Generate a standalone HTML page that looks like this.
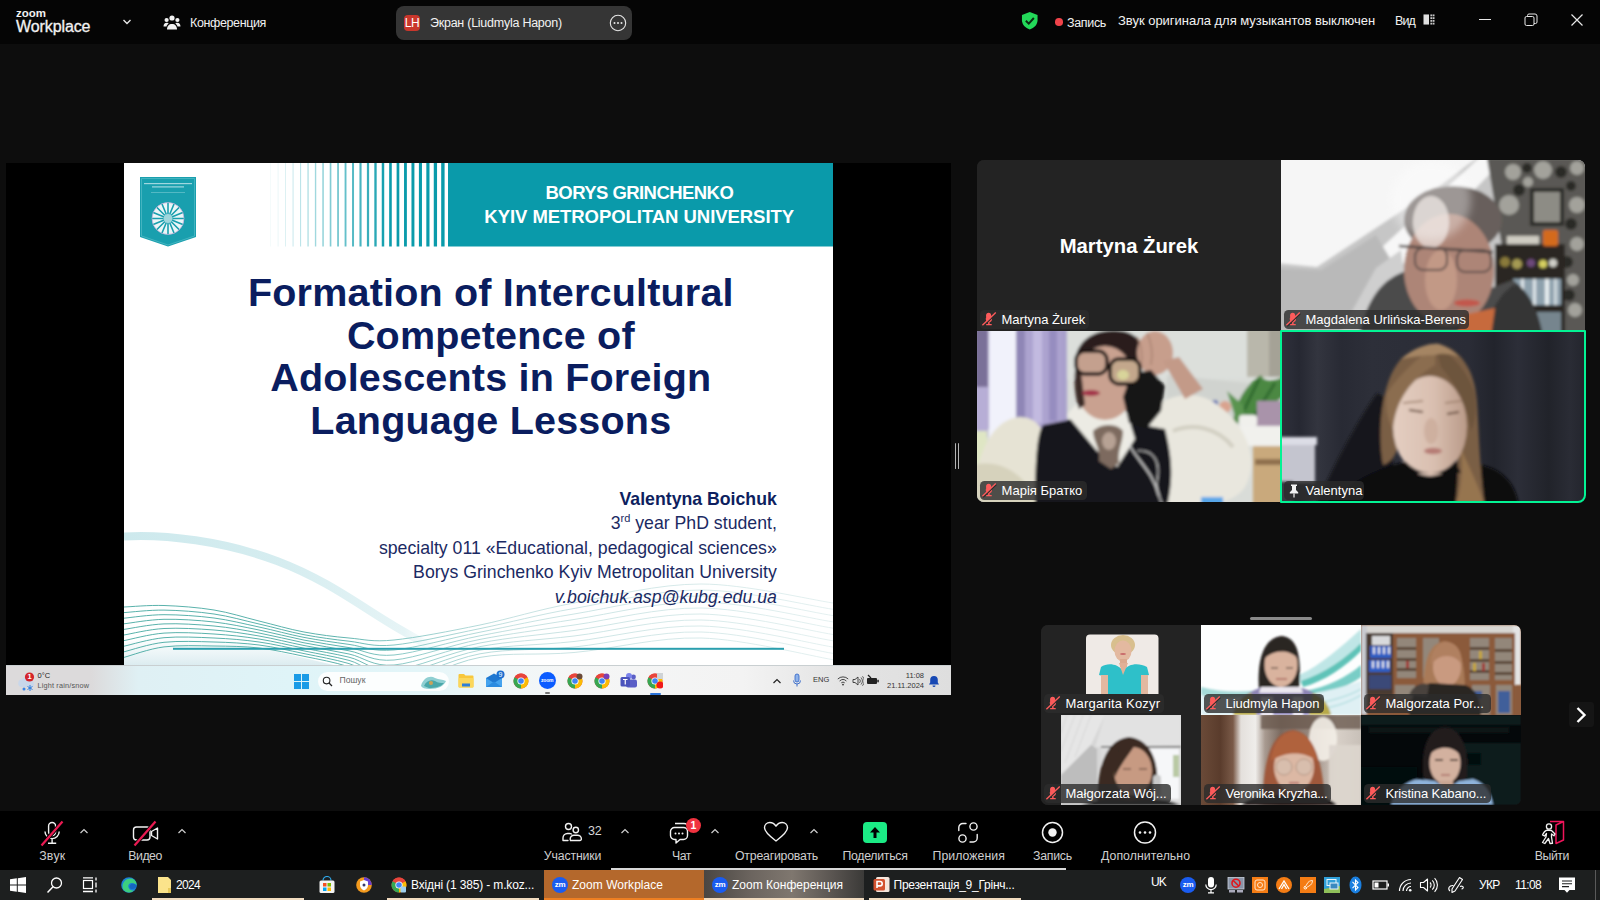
<!DOCTYPE html>
<html lang="ru">
<head>
<meta charset="utf-8">
<title>Zoom Конференция</title>
<style>
*{box-sizing:border-box;margin:0;padding:0}
html,body{width:1600px;height:900px;overflow:hidden;background:#0d0d0d}
body{position:relative;font-family:"Liberation Sans","DejaVu Sans",sans-serif;color:#fff;font-size:13px}
.abs{position:absolute}
#titlebar{position:absolute;left:0;top:0;width:1600px;height:44px;background:#050505}
#titlebar .t{position:absolute;white-space:nowrap;color:#f2f2f2}
#share{position:absolute;left:6px;top:163px;width:945px;height:532px;background:#000;overflow:hidden}
#slide{position:absolute;left:118px;top:0;width:709px;height:502px;background:#fff;overflow:hidden}
#w11{position:absolute;left:0;top:502px;width:945px;height:30px;border-top:1px solid #c9cfd1;background:linear-gradient(90deg,#dcdadb 0,#dcdadb 9%,#dff0f4 14%,#dff4f8 30%,#e3f5f8 44%,#f0f7f8 52%,#f5f6f6 60%,#f3f3f3 78%,#e4e4e4 88%,#dedede 100%)}
#toolbar{position:absolute;left:0;top:811px;width:1600px;height:59px;background:#000}
#wintask{position:absolute;left:0;top:870px;width:1600px;height:30px;background:#1d1f1f}
.tile{position:absolute;overflow:hidden;background:#232323}
.tag{position:absolute;height:19px;line-height:19px;border-radius:4.500px;background:rgba(44,44,44,.8);color:#fff;font-size:13px;white-space:nowrap;padding:0 0 0 21.500px;overflow:hidden}
.hd{text-align:center;font-weight:bold;font-size:18.5px;line-height:22px;color:#fff;white-space:nowrap}
.ttl{left:0;width:733.7px;text-align:center;font-weight:bold;font-size:39.5px;line-height:43px;color:#0a1d5f;white-space:nowrap;letter-spacing:0.2px}
.au{right:56.2px;text-align:right;font-size:17.7px;line-height:22px;color:#1b2a63;white-space:nowrap}
.tl{position:absolute;top:36.8px;font-size:12.3px;line-height:16px;color:#cfcfcf;white-space:nowrap}
.kl{position:absolute;font-size:12px;line-height:14px;color:#fff;white-space:nowrap}
</style>
</head>
<body>
<div id="titlebar">
  <div class="t" style="left:16px;top:6.5px;font-size:11.5px;font-weight:bold;letter-spacing:0px;line-height:12px">zoom</div>
  <div class="t" style="left:16px;top:17px;font-size:16px;line-height:20px;letter-spacing:-0.1px;-webkit-text-stroke:0.3px #f2f2f2">Workplace</div>
  <svg class="abs" style="left:121px;top:17px" width="12" height="10" viewBox="0 0 12 10"><path d="M2.5 3 L6 6.5 L9.5 3" fill="none" stroke="#e8e8e8" stroke-width="1.4"/></svg>
  <svg class="abs" style="left:163px;top:14px" width="18" height="17" viewBox="0 0 18 17"><g fill="#f2f2f2"><circle cx="9" cy="4" r="2.6"/><circle cx="3.6" cy="6" r="2.1"/><circle cx="14.4" cy="6" r="2.1"/><path d="M4 15.5c0-3.5 2-5.5 5-5.500s5 2 5 5.500z"/><path d="M0.500 12.500c0-2.500 1.200-3.800 3.200-3.800c1 0 1.500 0.300 2 0.800c-1.300 1-2 2-2.200 3z"/><path d="M17.500 12.500c0-2.500-1.200-3.800-3.200-3.800c-1 0-1.500 0.300-2 0.800c1.300 1 2 2 2.200 3z"/></g></svg>
  <div class="t" style="left:190px;top:15px;font-size:12.5px;line-height:16px;letter-spacing:-0.37px">Конференция</div>
  <div class="abs" style="left:396px;top:6px;width:236px;height:34px;border-radius:8px;background:#353535"></div>
  <div class="abs" style="left:404px;top:15px;width:16px;height:16px;border-radius:4px;background:#c9372c;color:#fff;font-size:12px;line-height:16px;text-align:center;letter-spacing:-0.3px">LH</div>
  <div class="t" style="left:430px;top:15px;font-size:12.5px;line-height:16px;letter-spacing:-0.25px">Экран (Liudmyla Hapon)</div>
  <svg class="abs" style="left:609px;top:14px" width="18" height="18" viewBox="0 0 18 18"><circle cx="9" cy="9" r="7.700" fill="none" stroke="#e6e6e6" stroke-width="1.100"/><circle cx="5.500" cy="9" r="1" fill="#e6e6e6"/><circle cx="9" cy="9" r="1" fill="#e6e6e6"/><circle cx="12.500" cy="9" r="1" fill="#e6e6e6"/></svg>
  <svg class="abs" style="left:1019.5px;top:11px" width="19.5" height="19.5" viewBox="0 0 20 20"><path d="M10 1 L18 4 V9.500 C18 14 14.500 17.500 10 19 C5.500 17.500 2 14 2 9.500 V4 Z" fill="#23d959"/><path d="M6 10 L9 13 L14.200 7.200" fill="none" stroke="#0a2a12" stroke-width="2"/></svg>
  <div class="abs" style="left:1055.2px;top:18.2px;width:7.6px;height:7.6px;border-radius:50%;background:#f0434a"></div>
  <div class="t" style="left:1067px;top:14.5px;font-size:12.5px;line-height:16px;letter-spacing:-0.33px">Запись</div>
  <div class="t" style="left:1118px;top:13px;font-size:13px;line-height:16px;letter-spacing:-0.02px">Звук оригинала для музыкантов выключен</div>
  <div class="t" style="left:1395px;top:13px;font-size:12.5px;line-height:16px;letter-spacing:-0.85px">Вид</div>
  <svg class="abs" style="left:1423px;top:14px" width="12" height="11" viewBox="0 0 13 12"><rect x="0.500" y="0.500" width="6" height="11" fill="#e0e0e0"/><g fill="#c8c8c8"><rect x="8" y="0.500" width="2" height="2"/><rect x="10.500" y="0.500" width="2" height="2"/><rect x="8" y="3.500" width="2" height="2"/><rect x="10.500" y="3.500" width="2" height="2"/><rect x="8" y="6.500" width="2" height="2"/><rect x="10.500" y="6.500" width="2" height="2"/><rect x="8" y="9.500" width="2" height="2"/><rect x="10.500" y="9.500" width="2" height="2"/></g></svg>
  <div class="abs" style="left:1479px;top:19px;width:12px;height:1px;background:#e8e8e8"></div>
  <svg class="abs" style="left:1524px;top:13px" width="14" height="14" viewBox="0 0 14 14"><rect x="1" y="3.500" width="9" height="9" rx="1.500" fill="none" stroke="#e8e8e8" stroke-width="1"/><path d="M3.500 3.500 V2.500 a1.500 1.500 0 0 1 1.500 -1.500 H11 a2 2 0 0 1 2 2 V9 a1.500 1.500 0 0 1 -1.500 1.500 H10" fill="none" stroke="#e8e8e8" stroke-width="1"/></svg>
  <svg class="abs" style="left:1570px;top:13px" width="14" height="14" viewBox="0 0 14 14"><path d="M1.500 1.500 L12.500 12.500 M12.500 1.500 L1.500 12.500" stroke="#e8e8e8" stroke-width="1.200"/></svg>
</div>
<div id="share">
  <div id="slide">
  <svg class="abs" style="left:0;top:0" width="709" height="502" viewBox="0 0 709 502">
    <!--WAVES--><defs>
<linearGradient id="bandg" gradientUnits="userSpaceOnUse" x1="0" x2="330" y1="0" y2="0"><stop offset="0" stop-color="#cde9ed"/><stop offset="0.5" stop-color="#d6edf0"/><stop offset="0.85" stop-color="#e6f4f6"/><stop offset="1" stop-color="#ffffff" stop-opacity="0"/></linearGradient>
<linearGradient id="bfade" gradientUnits="userSpaceOnUse" x1="0" x2="709" y1="0" y2="0"><stop offset="0" stop-color="#3aa39b"/><stop offset="0.3" stop-color="#3fa59e"/><stop offset="0.4" stop-color="#7cc2bf"/><stop offset="0.55" stop-color="#bcdcdc"/><stop offset="1" stop-color="#e0eeee"/></linearGradient>
<linearGradient id="blfill" x1="0" x2="0" y1="0" y2="1"><stop offset="0" stop-color="#e3f2f5" stop-opacity="0"/><stop offset="1" stop-color="#dcecf0"/></linearGradient>
</defs>
<path d="M0 480 C40 470 90 470 150 488 L210 502 L0 502 Z" fill="url(#blfill)"/>
<path d="M0 373.500 C 40 371, 100 378, 153 398 S 240 446, 277 467 S 310 486, 326 492" fill="none" stroke="url(#bandg)" stroke-width="8"/>

<path d="M0.0 444.0 C6.7 443.8 25.0 442.0 40.0 442.5 C55.0 443.0 74.2 444.4 90.0 447.0 C105.8 449.6 120.0 454.3 135.0 458.0 C150.0 461.7 165.0 466.2 180.0 469.0 C195.0 471.8 210.0 473.7 225.0 475.0 C240.0 476.3 248.2 479.2 270.0 477.0 C291.8 474.8 326.0 468.2 356.0 462.0 C386.0 455.8 413.2 446.8 450.0 440.0 C486.8 433.2 533.8 421.0 577.0 421.0 C620.2 421.0 687.0 436.8 709.0 440.0" fill="none" stroke="url(#bfade)" stroke-width="0.85"/><path d="M0.0 449.6 C6.7 449.2 25.0 446.9 40.0 447.1 C55.0 447.3 74.2 448.7 90.0 451.0 C105.8 453.3 120.0 457.6 135.0 461.0 C150.0 464.4 165.0 468.8 180.0 471.7 C195.0 474.6 210.0 476.5 225.0 478.2 C240.0 479.9 248.2 484.1 270.0 482.0 C291.8 479.9 326.0 471.7 356.0 465.6 C386.0 459.5 413.2 451.9 450.0 445.5 C486.8 439.1 533.8 426.9 577.0 427.0 C620.2 427.1 687.0 443.1 709.0 446.3" fill="none" stroke="url(#bfade)" stroke-width="0.85"/><path d="M0.0 455.2 C6.7 454.6 25.0 451.7 40.0 451.7 C55.0 451.7 74.2 452.9 90.0 455.0 C105.8 457.1 120.0 460.8 135.0 464.0 C150.0 467.2 165.0 471.5 180.0 474.4 C195.0 477.3 210.0 479.3 225.0 481.4 C240.0 483.5 248.2 489.0 270.0 487.0 C291.8 485.0 326.0 475.2 356.0 469.2 C386.0 463.2 413.2 457.0 450.0 451.0 C486.8 445.0 533.8 432.7 577.0 433.0 C620.2 433.3 687.0 449.3 709.0 452.6" fill="none" stroke="url(#bfade)" stroke-width="0.85"/><path d="M0.0 460.8 C6.7 460.1 25.0 456.6 40.0 456.3 C55.0 456.0 74.2 457.2 90.0 459.0 C105.8 460.8 120.0 464.0 135.0 467.0 C150.0 470.0 165.0 474.2 180.0 477.1 C195.0 480.0 210.0 482.1 225.0 484.6 C240.0 487.1 248.2 494.0 270.0 492.0 C291.8 490.0 326.0 478.7 356.0 472.8 C386.0 466.9 413.2 462.1 450.0 456.5 C486.8 450.9 533.8 438.6 577.0 439.0 C620.2 439.4 687.0 455.6 709.0 458.9" fill="none" stroke="url(#bfade)" stroke-width="0.85"/><path d="M0.0 466.4 C6.7 465.5 25.0 461.5 40.0 460.9 C55.0 460.3 74.2 461.5 90.0 463.0 C105.8 464.5 120.0 467.2 135.0 470.0 C150.0 472.8 165.0 476.8 180.0 479.8 C195.0 482.8 210.0 484.9 225.0 487.8 C240.0 490.7 248.2 498.9 270.0 497.0 C291.8 495.1 326.0 482.2 356.0 476.4 C386.0 470.6 413.2 467.2 450.0 462.0 C486.8 456.8 533.8 444.5 577.0 445.0 C620.2 445.5 687.0 461.8 709.0 465.2" fill="none" stroke="url(#bfade)" stroke-width="0.85"/><path d="M0.0 472.0 C6.7 470.9 25.0 466.3 40.0 465.5 C55.0 464.7 74.2 465.8 90.0 467.0 C105.8 468.2 120.0 470.4 135.0 473.0 C150.0 475.6 165.0 479.5 180.0 482.5 C195.0 485.5 210.0 487.8 225.0 491.0 C240.0 494.2 248.2 503.8 270.0 502.0 C291.8 500.2 326.0 485.8 356.0 480.0 C386.0 474.2 413.2 472.3 450.0 467.5 C486.8 462.7 533.8 450.3 577.0 451.0 C620.2 451.7 687.0 468.1 709.0 471.5" fill="none" stroke="url(#bfade)" stroke-width="0.85"/><path d="M0.0 477.6 C6.7 476.4 25.0 471.2 40.0 470.1 C55.0 469.0 74.2 470.0 90.0 471.0 C105.8 472.0 120.0 473.6 135.0 476.0 C150.0 478.4 165.0 482.2 180.0 485.2 C195.0 488.2 210.0 490.6 225.0 494.2 C240.0 497.8 248.2 508.8 270.0 507.0 C291.8 505.2 326.0 489.3 356.0 483.6 C386.0 477.9 413.2 477.4 450.0 473.0 C486.8 468.6 533.8 456.2 577.0 457.0 C620.2 457.8 687.0 474.3 709.0 477.8" fill="none" stroke="url(#bfade)" stroke-width="0.85"/><path d="M0.0 483.2 C6.7 481.8 25.0 476.1 40.0 474.7 C55.0 473.3 74.2 474.3 90.0 475.0 C105.8 475.7 120.0 476.9 135.0 479.0 C150.0 481.1 165.0 484.8 180.0 487.9 C195.0 491.0 210.0 493.4 225.0 497.4 C240.0 501.4 248.2 513.7 270.0 512.0 C291.8 510.3 326.0 492.8 356.0 487.2 C386.0 481.6 413.2 482.5 450.0 478.5 C486.8 474.5 533.8 462.1 577.0 463.0 C620.2 463.9 687.0 480.6 709.0 484.1" fill="none" stroke="url(#bfade)" stroke-width="0.85"/><path d="M0.0 488.8 C6.7 487.2 25.0 480.9 40.0 479.3 C55.0 477.7 74.2 478.6 90.0 479.0 C105.8 479.4 120.0 480.1 135.0 482.0 C150.0 483.9 165.0 487.5 180.0 490.6 C195.0 493.7 210.0 496.2 225.0 500.6 C240.0 505.0 248.2 518.6 270.0 517.0 C291.8 515.4 326.0 496.3 356.0 490.8 C386.0 485.3 413.2 487.6 450.0 484.0 C486.8 480.4 533.8 467.9 577.0 469.0 C620.2 470.1 687.0 486.8 709.0 490.4" fill="none" stroke="url(#bfade)" stroke-width="0.85"/><path d="M0.0 494.4 C6.7 492.6 25.0 485.8 40.0 483.9 C55.0 482.0 74.2 482.8 90.0 483.0 C105.8 483.2 120.0 483.3 135.0 485.0 C150.0 486.7 165.0 490.2 180.0 493.3 C195.0 496.4 210.0 499.0 225.0 503.8 C240.0 508.6 248.2 523.6 270.0 522.0 C291.8 520.4 326.0 499.8 356.0 494.4 C386.0 489.0 413.2 492.7 450.0 489.5 C486.8 486.3 533.8 473.8 577.0 475.0 C620.2 476.2 687.0 493.1 709.0 496.7" fill="none" stroke="url(#bfade)" stroke-width="0.85"/>
<rect x="49" y="484.800" width="611" height="2" fill="#2b9fae"/><!--/WAVES-->
    <rect x="146.30" y="0" width="0.50" height="83.500" fill="#0a9bab" opacity="0.08"/><rect x="153.73" y="0" width="0.67" height="83.500" fill="#0a9bab" opacity="0.12"/><rect x="161.16" y="0" width="0.82" height="83.500" fill="#0a9bab" opacity="0.17"/><rect x="168.59" y="0" width="0.96" height="83.500" fill="#0a9bab" opacity="0.23"/><rect x="176.02" y="0" width="1.10" height="83.500" fill="#0a9bab" opacity="0.28"/><rect x="183.45" y="0" width="1.23" height="83.500" fill="#0a9bab" opacity="0.34"/><rect x="190.88" y="0" width="1.37" height="83.500" fill="#0a9bab" opacity="0.39"/><rect x="198.31" y="0" width="1.49" height="83.500" fill="#0a9bab" opacity="0.45"/><rect x="205.74" y="0" width="1.62" height="83.500" fill="#0a9bab" opacity="0.51"/><rect x="213.17" y="0" width="1.75" height="83.500" fill="#0a9bab" opacity="0.57"/><rect x="220.60" y="0" width="1.87" height="83.500" fill="#0a9bab" opacity="0.63"/><rect x="228.03" y="0" width="1.99" height="83.500" fill="#0a9bab" opacity="0.69"/><rect x="235.46" y="0" width="2.11" height="83.500" fill="#0a9bab" opacity="0.75"/><rect x="242.89" y="0" width="2.24" height="83.500" fill="#0a9bab" opacity="0.81"/><rect x="250.32" y="0" width="2.36" height="83.500" fill="#0a9bab" opacity="0.87"/><rect x="257.75" y="0" width="2.47" height="83.500" fill="#0a9bab" opacity="0.94"/><rect x="265.18" y="0" width="2.59" height="83.500" fill="#0a9bab" opacity="1.00"/><rect x="272.61" y="0" width="2.71" height="83.500" fill="#0a9bab" opacity="1.00"/><rect x="280.04" y="0" width="2.83" height="83.500" fill="#0a9bab" opacity="1.00"/><rect x="287.47" y="0" width="2.94" height="83.500" fill="#0a9bab" opacity="1.00"/><rect x="294.90" y="0" width="3.06" height="83.500" fill="#0a9bab" opacity="1.00"/><rect x="302.33" y="0" width="3.17" height="83.500" fill="#0a9bab" opacity="1.00"/><rect x="309.76" y="0" width="3.29" height="83.500" fill="#0a9bab" opacity="1.00"/><rect x="317.19" y="0" width="3.40" height="83.500" fill="#0a9bab" opacity="1.00"/>
    <rect x="324" y="0" width="385" height="83.500" fill="#0a9aaa"/>
    <g transform="translate(16,14)">
      <path d="M0 0 H56 V60 L28 69.500 L0 60 Z" fill="#199fae"/>
      <path d="M1.500 1.500 H54.500 V59 L28 68 L1.500 59 Z" fill="none" stroke="#5fc3cd" stroke-width="0.600"/>
      <rect x="4" y="6" width="48" height="1.200" fill="#d8f0f3" opacity="0.7"/>
      <rect x="12" y="9.300" width="32" height="1.200" fill="#d8f0f3" opacity="0.7"/>
      <rect x="11" y="15" width="34" height="0.500" fill="#8fd3da"/>
      <circle cx="28" cy="41.500" r="16" fill="#eaf6f7"/>
      <g stroke="#199fae" stroke-width="1.600">
        <path d="M28 25.500 V57.500 M12 41.500 H44 M16.700 30.200 L39.300 52.800 M39.300 30.200 L16.700 52.800 M21.900 26.700 L34.100 56.300 M34.100 26.700 L21.900 56.300 M13.200 35.400 L42.800 47.600 M42.800 35.400 L13.200 47.600"/>
      </g>
      <circle cx="28" cy="41.500" r="4.500" fill="#9fd6dc"/>
      <circle cx="28" cy="41.500" r="16" fill="none" stroke="#c9a6d8" stroke-width="0.800" opacity="0.8"/>
    </g>
  </svg>
  <div class="abs hd" style="left:322.9px;top:18.7px;width:385px;letter-spacing:-0.56px">BORYS GRINCHENKO</div>
  <div class="abs hd" style="left:322.7px;top:42.7px;width:385px;letter-spacing:-0.05px">KYIV METROPOLITAN UNIVERSITY</div>
  <div class="abs ttl" style="top:108.1px">Formation of Intercultural</div>
  <div class="abs ttl" style="top:150.7px">Competence of</div>
  <div class="abs ttl" style="top:193.3px">Adolescents in Foreign</div>
  <div class="abs ttl" style="top:235.9px">Language Lessons</div>
  <div class="abs au" style="top:324.9px;font-weight:bold;color:#0e1f5f">Valentyna Boichuk</div>
  <div class="abs au" style="top:348.9px">3<span style="font-size:11px;position:relative;top:-6.5px">rd</span> year PhD student,</div>
  <div class="abs au" style="top:373.6px">specialty 011 «Educational, pedagogical sciences»</div>
  <div class="abs au" style="top:398px">Borys Grinchenko Kyiv Metropolitan University</div>
  <div class="abs au" style="top:422.9px;font-style:italic">v.boichuk.asp@kubg.edu.ua</div>
</div>
  <div id="w11">
  <svg class="abs" style="left:10px;top:4px" width="24" height="24" viewBox="0 0 24 24"><path d="M5 17 a4 4 0 0 1 1 -7.800 a5 5 0 0 1 9 1.800 a3 3 0 0 1 0 6 z" fill="#c9d7ea"/><circle cx="8" cy="19" r="1.500" fill="#3a86e8"/><path d="M14 15v6M11.500 16.500l5 3M16.500 16.500l-5 3" stroke="#2f7fe0" stroke-width="1"/><circle cx="13.500" cy="7" r="4.600" fill="#d4242b"/></svg>
  <div class="abs" style="left:21.4px;top:7px;font-size:7.5px;line-height:8px;color:#fff;font-weight:bold">1</div>
  <div class="abs" style="left:31.5px;top:5.8px;font-size:7.5px;line-height:8px;color:#222;white-space:nowrap">0°C</div>
  <div class="abs" style="left:31.5px;top:15.8px;font-size:7.3px;line-height:8px;color:#555;white-space:nowrap;letter-spacing:0.17px">Light rain/snow</div>
  <svg class="abs" style="left:288px;top:8px" width="15" height="15" viewBox="0 0 15 15"><g fill="#1a9be6"><rect x="0" y="0" width="7" height="7"/><rect x="8" y="0" width="7" height="7"/><rect x="0" y="8" width="7" height="7"/><rect x="8" y="8" width="7" height="7"/></g></svg>
  <div class="abs" style="left:312px;top:6px;width:131px;height:19px;border-radius:9.500px;background:#fcfefe"></div>
  <svg class="abs" style="left:316px;top:10px" width="11" height="11" viewBox="0 0 11 11"><circle cx="4.600" cy="4.600" r="3.300" fill="none" stroke="#222" stroke-width="1.100"/><path d="M7 7 L10 10" stroke="#222" stroke-width="1.200"/></svg>
  <div class="abs" style="left:333.5px;top:10.4px;font-size:8.6px;line-height:9px;color:#666;white-space:nowrap">Пошук</div>
  <svg class="abs" style="left:414px;top:8px" width="28" height="16" viewBox="0 0 28 16"><path d="M1 12 C3 4 10 1 15 4 C19 6 22 5 26 7 C24 12 18 15 10 15 C5 15 2 14 1 12 Z" fill="#8fcfd2"/><path d="M4 12 C6 7 11 5 15 7 C18 9 21 9 24 9 C21 13 15 14 9 14 Z" fill="#4aa7a9"/><circle cx="11" cy="9" r="2" fill="#c9a25b"/></svg>
  <svg class="abs" style="left:452px;top:7px" width="16" height="15" viewBox="0 0 16 15"><path d="M0.500 2 a1 1 0 0 1 1 -1 h4.500 l1.500 1.500 h7 a1 1 0 0 1 1 1 v10 a1 1 0 0 1 -1 1 h-13 a1 1 0 0 1 -1 -1 z" fill="#f8c73b"/><rect x="0.500" y="5" width="15" height="9.500" rx="1" fill="#fbd75b"/><rect x="4" y="10.500" width="8" height="3" fill="#2d7fd8"/></svg>
  <svg class="abs" style="left:479px;top:4px" width="20" height="20" viewBox="0 0 20 20"><path d="M1 8 L9 3.500 L17 8 V17 H1 Z" fill="#1f78d1"/><path d="M1 8 L9 13 L17 8 V17 H1 Z" fill="#45a3ee"/><path d="M1 17 L9 11.500 L17 17 Z" fill="#2b8be0"/><circle cx="15.500" cy="4.500" r="4" fill="#1d6fd0"/></svg>
  <div class="abs" style="left:492.500px;top:4.500px;font-size:7px;line-height:8px;color:#fff">9</div>
  <svg class="abs" style="left:507px;top:7px" width="16" height="16" viewBox="0 0 16 16"><circle cx="8" cy="8" r="7.500" fill="#e8453c"/><path d="M8 8 L1.500 11.800 A7.500 7.500 0 0 0 8 15.500 L11.700 9.500 Z" fill="#34a853"/><path d="M8 8 L1.500 4.300 A7.500 7.500 0 0 0 1.500 11.800 L5 10 Z" fill="#34a853"/><path d="M8 8 L14.500 4.300 A7.500 7.500 0 0 1 8 15.500 Z" fill="#fbbc05"/><path d="M1.500 4.300 A7.500 7.500 0 0 1 14.500 4.300 L8 4.300 Z" fill="#e8453c"/><circle cx="8" cy="8" r="3.600" fill="#fff"/><circle cx="8" cy="8" r="2.800" fill="#4285f4"/></svg>
  <div class="abs" style="left:533px;top:6px;width:17px;height:17px;border-radius:50%;background:#0b5cff"></div>
  <div class="abs" style="left:535px;top:11px;font-size:5px;line-height:6px;color:#fff;font-weight:bold;letter-spacing:-0.2px">zoom</div>
  <div class="abs" style="left:539px;top:26px;width:5px;height:1.500px;border-radius:1px;background:#777"></div>
  <svg class="abs" style="left:561px;top:7px" width="16" height="16" viewBox="0 0 16 16"><circle cx="8" cy="8" r="7.500" fill="#e8453c"/><path d="M8 8 L1.500 11.800 A7.500 7.500 0 0 0 8 15.500 L11.700 9.500 Z" fill="#34a853"/><path d="M8 8 L1.500 4.300 A7.500 7.500 0 0 0 1.500 11.800 L5 10 Z" fill="#34a853"/><path d="M8 8 L14.500 4.300 A7.500 7.500 0 0 1 8 15.500 Z" fill="#fbbc05"/><path d="M1.500 4.300 A7.500 7.500 0 0 1 14.500 4.300 L8 4.300 Z" fill="#e8453c"/><circle cx="8" cy="8" r="3.600" fill="#fff"/><circle cx="8" cy="8" r="2.800" fill="#4285f4"/><circle cx="12.500" cy="3.500" r="3" fill="#6a4a3a"/></svg>
  <svg class="abs" style="left:588px;top:7px" width="16" height="16" viewBox="0 0 16 16"><circle cx="8" cy="8" r="7.500" fill="#e8453c"/><path d="M8 8 L1.500 11.800 A7.500 7.500 0 0 0 8 15.500 L11.700 9.500 Z" fill="#34a853"/><path d="M8 8 L1.500 4.300 A7.500 7.500 0 0 0 1.500 11.800 L5 10 Z" fill="#34a853"/><path d="M8 8 L14.500 4.300 A7.500 7.500 0 0 1 8 15.500 Z" fill="#fbbc05"/><path d="M1.500 4.300 A7.500 7.500 0 0 1 14.500 4.300 L8 4.300 Z" fill="#e8453c"/><circle cx="8" cy="8" r="3.600" fill="#fff"/><circle cx="8" cy="8" r="2.800" fill="#4285f4"/><circle cx="12.500" cy="3.500" r="3" fill="#7a3fb5"/></svg>
  <svg class="abs" style="left:614px;top:7px" width="18" height="16" viewBox="0 0 18 16"><circle cx="13.500" cy="4" r="2.400" fill="#5b5fc7"/><circle cx="9" cy="3" r="3" fill="#7b83eb"/><rect x="6" y="6.500" width="11" height="8" rx="2" fill="#5b5fc7"/><rect x="0.500" y="4" width="9.500" height="9.500" rx="1.500" fill="#4b53bc"/><path d="M3 6.500h4.500M5.250 6.500v5" stroke="#fff" stroke-width="1.200"/></svg>
  <svg class="abs" style="left:641px;top:7px" width="16" height="16" viewBox="0 0 16 16"><circle cx="8" cy="8" r="7.500" fill="#e8453c"/><path d="M8 8 L1.500 11.800 A7.500 7.500 0 0 0 8 15.500 L11.700 9.500 Z" fill="#34a853"/><path d="M8 8 L1.500 4.300 A7.500 7.500 0 0 0 1.500 11.800 L5 10 Z" fill="#34a853"/><path d="M8 8 L14.500 4.300 A7.500 7.500 0 0 1 8 15.500 Z" fill="#fbbc05"/><path d="M1.500 4.300 A7.500 7.500 0 0 1 14.500 4.300 L8 4.300 Z" fill="#e8453c"/><circle cx="8" cy="8" r="3.600" fill="#fff"/><circle cx="8" cy="8" r="2.800" fill="#4285f4"/><circle cx="13" cy="12" r="3.600" fill="#f01a1a"/><rect x="10" y="-1" width="6" height="7" fill="#cfd3d6"/></svg>
  <div class="abs" style="left:644px;top:27px;width:11px;height:2px;border-radius:1px;background:#2b73d8"></div>
  <svg class="abs" style="left:766px;top:11px" width="10" height="8" viewBox="0 0 10 8"><path d="M1.500 6 L5 2.500 L8.500 6" fill="none" stroke="#222" stroke-width="1.200"/></svg>
  <svg class="abs" style="left:786px;top:7px" width="10" height="15" viewBox="0 0 10 15"><rect x="3" y="1" width="4" height="8" rx="2" fill="#8fb3ea" stroke="#2d62c6" stroke-width="0.800"/><path d="M1.500 7.500 a3.500 3.500 0 0 0 7 0 M5 11 v2.500" fill="none" stroke="#2d62c6" stroke-width="0.900"/></svg>
  <div class="abs" style="left:807px;top:9.3px;font-size:7.500px;line-height:9px;color:#333;white-space:nowrap">ENG</div>
  <svg class="abs" style="left:831px;top:9px" width="12" height="11" viewBox="0 0 12 11"><path d="M0.800 4 a7.500 7.500 0 0 1 10.400 0 M2.600 6 a5 5 0 0 1 6.800 0 M4.300 7.800 a2.600 2.600 0 0 1 3.400 0" fill="none" stroke="#333" stroke-width="0.900"/><circle cx="6" cy="9.600" r="0.900" fill="#333"/></svg>
  <svg class="abs" style="left:846px;top:9px" width="12" height="12" viewBox="0 0 12 12"><path d="M1 4.500 h2 l3 -2.500 v8 l-3 -2.500 h-2 z" fill="none" stroke="#333" stroke-width="0.900"/><path d="M7.500 4 a3 3 0 0 1 0 4 M9 2.500 a5 5 0 0 1 0 7 M10.500 1.300 a7 7 0 0 1 0 9.400" fill="none" stroke="#333" stroke-width="0.800"/></svg>
  <svg class="abs" style="left:860px;top:8px" width="14" height="12" viewBox="0 0 14 12"><rect x="1" y="4" width="10" height="6" rx="1" fill="#222"/><rect x="11.300" y="5.800" width="1.500" height="2.500" fill="#222"/><path d="M2 1 l3 3" stroke="#222" stroke-width="1.200"/></svg>
  <div class="abs" style="right:27px;top:4.9px;font-size:7.500px;line-height:9px;color:#333;white-space:nowrap">11:08</div>
  <div class="abs" style="right:27px;top:14.8px;font-size:7.500px;line-height:9px;color:#333;white-space:nowrap">21.11.2024</div>
  <svg class="abs" style="left:922px;top:9px" width="12" height="13" viewBox="0 0 12 13"><path d="M6 1 a3.800 3.800 0 0 1 3.800 3.800 v2.700 l1.200 2 h-10 l1.200 -2 v-2.700 a3.800 3.800 0 0 1 3.800 -3.800 z" fill="#1748b4"/><path d="M4.500 10.500 a1.500 1.500 0 0 0 3 0 z" fill="#1748b4"/></svg>
</div>
</div>
<div class="abs" style="left:954.7px;top:443px;width:1.4px;height:26px;border-radius:1px;background:#b4b4b4"></div><div class="abs" style="left:957.8px;top:443px;width:1.4px;height:26px;border-radius:1px;background:#b4b4b4"></div><!--GALLERY--><div id="gallery" style="position:absolute;left:977px;top:160px;width:608px;height:342px;border-radius:7px;overflow:hidden;background:#232323"><div class="tile" style="left:0;top:0;width:304px;height:171px;background:#232323"><div class="abs" style="left:0;top:74px;width:304px;text-align:center;font-weight:bold;font-size:20.3px;line-height:24px;color:#fff">Martyna Żurek</div><div class="tag" style="left:3px;top:150px;width:109px;letter-spacing:0px"><svg class="abs" style="left:0;top:0" width="19" height="19" viewBox="0 0 19 19"><rect x="6.100" y="2.700" width="5" height="8.300" rx="2.500" fill="#fd5b5b"/><path d="M5.700 8.200 h6.400 a3.200 4 0 0 1 -6.400 0 z" fill="#fd5b5b"/><rect x="8.100" y="11.800" width="1.500" height="2.600" fill="#fd5b5b"/><rect x="6" y="14.100" width="5.800" height="1.200" rx="0.500" fill="#fd5b5b"/><path d="M3.100 16.300 L16.400 3.600" stroke="#2b2b2b" stroke-width="1.300"/><path d="M2.400 15.300 L15.800 2.600" stroke="#fd5b5b" stroke-width="1.350"/></svg>Martyna Żurek</div></div><div class="tile" style="left:304px;top:0;width:304px;height:171px"><svg class="abs" style="left:0;top:0" width="304" height="171" viewBox="0 0 304 171">
<defs><filter id="b2" x="-5%" y="-5%" width="110%" height="110%"><feGaussianBlur stdDeviation="1.6"/></filter><filter id="b2b" x="-10%" y="-10%" width="120%" height="120%"><feGaussianBlur stdDeviation="4"/></filter></defs>
<rect width="304" height="171" fill="#f6f6f6"/>
<g filter="url(#b2)">
<polygon points="-5,103 36,107 160,25 196,-2 310,-2 310,176 -5,176" fill="#c6c6c6"/>
<polygon points="198,-2 224,-2 118,108 74,112" fill="#f7f7f7"/>
<polygon points="-5,108 40,110 95,75 110,100 60,171 -5,171" fill="#b9b9b9"/>
<polygon points="95,108 120,90 130,171 60,171" fill="#cfcfcf"/>
<polygon points="206,-2 310,-2 310,176 236,176 218,70" fill="#5a5954"/>
<g fill="#a3a29b"><circle cx="232" cy="12" r="8"/><circle cx="262" cy="10" r="9"/><circle cx="296" cy="8" r="7"/><circle cx="228" cy="45" r="10"/><circle cx="296" cy="45" r="8"/><circle cx="296" cy="84" r="7"/><circle cx="292" cy="120" r="6"/><circle cx="294" cy="150" r="7"/><circle cx="247" cy="22" r="5"/></g>
<g fill="#2c2b28"><circle cx="246" cy="8" r="5"/><circle cx="280" cy="12" r="6"/><circle cx="238" cy="30" r="6"/><circle cx="290" cy="26" r="5"/><circle cx="290" cy="64" r="6"/><circle cx="286" cy="102" r="6"/><circle cx="288" cy="135" r="6"/></g>
<rect x="249" y="28" width="34" height="38" fill="#2b2a27"/><rect x="253" y="32" width="26" height="30" fill="#8d8c85"/>
<rect x="214" y="84" width="70" height="92" fill="#2a2522"/>
<rect x="226" y="76" width="32" height="8" fill="#cfccc2"/>
<rect x="262" y="70" width="15" height="16" rx="2" fill="#d46a1c"/>
<g><circle cx="224" cy="102" r="5" fill="#8a7a3a"/><circle cx="236" cy="104" r="5" fill="#a59a52"/><circle cx="250" cy="103" r="4" fill="#6c4a7a"/><circle cx="262" cy="104" r="4" fill="#d6d060"/><circle cx="272" cy="103" r="4" fill="#cfcfc8"/></g>
<rect x="232" y="119" width="48" height="26" fill="#8ea1ad"/><rect x="240" y="119" width="3" height="26" fill="#dfe6ea"/><rect x="252" y="119" width="3" height="26" fill="#dfe6ea"/><rect x="264" y="119" width="4" height="26" fill="#e8eef0"/><rect x="273" y="119" width="3" height="26" fill="#cfd8dd"/>
<rect x="250" y="152" width="30" height="22" fill="#76858e"/>
<path d="M78 176 C86 140 100 118 128 110 L150 150 L232 120 C246 130 256 150 262 176 Z" fill="#4b4b4b"/>
<path d="M200 176 C210 150 222 128 236 124 C250 134 258 154 262 176 Z" fill="#343434"/>
<ellipse cx="172" cy="60" rx="49" ry="34" fill="#675f5b"/>
<ellipse cx="168" cy="110" rx="45" ry="56" fill="#ad8577"/>
<ellipse cx="150" cy="62" rx="18" ry="26" fill="#e9dfda" opacity="0.75"/>
<ellipse cx="160" cy="120" rx="16" ry="30" fill="#c79d8a" opacity="0.8"/>
<path d="M118 86 L212 92" stroke="#4b4340" stroke-width="2.400" fill="none"/>
<rect x="134" y="88" width="32" height="22" rx="8" fill="none" stroke="#5a4c48" stroke-width="2"/><rect x="176" y="90" width="34" height="22" rx="8" fill="none" stroke="#5a4c48" stroke-width="2"/>
<ellipse cx="186" cy="143" rx="13" ry="3.500" fill="#c2574b"/>
<polygon points="182,155 214,148 210,176 176,176" fill="#c76a3c"/>
</g>
<ellipse cx="150" cy="40" rx="40" ry="40" fill="#ffffff" opacity="0.35" filter="url(#b2b)"/>
</svg>
<div class="tag" style="left:3px;top:150px;width:185px;letter-spacing:0px"><svg class="abs" style="left:0;top:0" width="19" height="19" viewBox="0 0 19 19"><rect x="6.100" y="2.700" width="5" height="8.300" rx="2.500" fill="#fd5b5b"/><path d="M5.700 8.200 h6.400 a3.200 4 0 0 1 -6.400 0 z" fill="#fd5b5b"/><rect x="8.100" y="11.800" width="1.500" height="2.600" fill="#fd5b5b"/><rect x="6" y="14.100" width="5.800" height="1.200" rx="0.500" fill="#fd5b5b"/><path d="M3.100 16.300 L16.400 3.600" stroke="#2b2b2b" stroke-width="1.300"/><path d="M2.400 15.300 L15.800 2.600" stroke="#fd5b5b" stroke-width="1.350"/></svg>Magdalena Urlińska-Berens</div></div><div class="tile" style="left:0;top:171px;width:304px;height:171px"><svg class="abs" style="left:0;top:0" width="304" height="171" viewBox="0 0 304 171">
<defs><filter id="b3" x="-5%" y="-5%" width="110%" height="110%"><feGaussianBlur stdDeviation="1.5"/></filter></defs>
<rect width="304" height="171" fill="#d9dcd8"/>
<g filter="url(#b3)">
<rect x="88" y="-2" width="222" height="50" fill="#dcdfdb"/><rect x="270" y="-2" width="40" height="48" fill="#b9b7ab"/><rect x="292" y="-2" width="16" height="48" fill="#a5a296"/>
<polygon points="190,44 310,56 310,100 190,92" fill="#d0d3cf"/>
<rect x="-2" y="-2" width="92" height="100" fill="#aca3cf"/>
<rect x="12" y="-2" width="27" height="125" fill="#f1f2fb"/>
<rect x="-2" y="-2" width="13" height="60" fill="#7a7098"/>
<rect x="-2" y="56" width="13" height="50" fill="#b7aed6"/>
<rect x="39" y="-2" width="9" height="96" fill="#8f86b6"/><rect x="56" y="-2" width="9" height="94" fill="#c2bae0"/><rect x="72" y="-2" width="8" height="92" fill="#968dc0"/><rect x="84" y="-2" width="6" height="92" fill="#a9a0cc"/>
<rect x="-2" y="100" width="12" height="36" fill="#dfe6c4"/>
<path d="M256 92 C258 74 266 56 284 44 C288 52 296 50 306 46 L306 66 C296 72 290 80 284 92 Z" fill="#4c8843"/>
<path d="M262 90 L282 48 M274 90 L298 52" stroke="#2f6a2e" stroke-width="3"/>
<path d="M250 60 L266 74 L270 92 L260 92 Z" fill="#5a9450"/>
<rect x="262" y="84" width="18" height="11" rx="3" fill="#f0f0ec"/>
<circle cx="248" cy="76" r="6" fill="#d9a38e"/><circle cx="238" cy="72" r="3" fill="#5a6ab0"/>
<rect x="280" y="70" width="26" height="27" fill="#a993aa"/>
<rect x="254" y="95" width="54" height="20" fill="#f1f1ed"/>
<rect x="276" y="115" width="32" height="60" fill="#c9a97c"/><rect x="278" y="128" width="28" height="6" fill="#8e6f4e"/>
<path d="M170 84 C184 66 214 56 238 72 C268 92 282 126 270 152 C262 170 240 176 186 176 Z" fill="#e9e7de"/>
<path d="M196 100 C216 92 240 96 256 116" stroke="#d2cfc2" stroke-width="4" fill="none"/>
<path d="M-2 150 C4 112 20 88 42 86 C60 86 68 98 70 120 L66 176 L-2 176 Z" fill="#e6e3d4"/>
<path d="M-2 176 L-2 134 C20 128 50 140 60 176 Z" fill="#d6d2bc"/>
<path d="M58 176 C58 130 60 102 66 94 L96 88 L140 132 L154 92 L188 98 C196 130 196 150 190 176 Z" fill="#17161a"/>
<path d="M90 84 L98 74 L150 82 L158 108 L140 136 L120 120 Z" fill="#ecebe4"/>
<path d="M116 100 C124 92 140 92 146 100 C146 112 140 120 142 132 L134 138 L122 130 C124 118 116 110 116 100 Z" fill="#7d6a5e"/>
<ellipse cx="132" cy="110" rx="7" ry="9" fill="#b7a294"/>
<path d="M98 30 C100 8 120 -4 146 0 C162 4 172 16 170 34 L150 30 L110 28 Z" fill="#2a1f1f"/>
<ellipse cx="128" cy="52" rx="30" ry="37" fill="#c9a190"/>
<path d="M99 30 C96 50 98 66 102 78 L108 74 L104 40 Z" fill="#3a2a28"/>
<ellipse cx="178" cy="22" rx="18" ry="22" fill="#c79e8c"/>
<polygon points="186,30 202,26 226,58 208,68" fill="#c39a88"/>
<path d="M160 6 C164 12 166 24 164 36 M170 2 C174 10 176 22 174 34" stroke="#a98472" stroke-width="1.500" fill="none"/>
<polygon points="154,43 174,39 188,55 184,80 170,97 152,92 146,66" fill="#171416"/>
<rect x="99" y="20" width="31" height="23" rx="9" fill="#c4a08e" stroke="#15110f" stroke-width="3.400"/><rect x="133" y="28" width="30" height="25" rx="9" fill="#c3a78c" stroke="#15110f" stroke-width="3.400"/>
<ellipse cx="146" cy="44" rx="6" ry="5" fill="#d8d49a"/>
<ellipse cx="114" cy="62" rx="9" ry="3" fill="#a3324a"/>
<path d="M150 110 C160 130 176 140 182 165" stroke="#e8e8e8" stroke-width="1.400" fill="none"/><path d="M160 120 C176 118 184 130 180 150 C178 160 184 168 186 176" stroke="#d8d8d8" stroke-width="1.200" fill="none"/>
<rect x="224" y="166" width="22" height="8" fill="#59a6e8"/>
</g>
</svg>
<div class="tag" style="left:3px;top:150px;width:107px;letter-spacing:0px"><svg class="abs" style="left:0;top:0" width="19" height="19" viewBox="0 0 19 19"><rect x="6.100" y="2.700" width="5" height="8.300" rx="2.500" fill="#fd5b5b"/><path d="M5.700 8.200 h6.400 a3.200 4 0 0 1 -6.400 0 z" fill="#fd5b5b"/><rect x="8.100" y="11.800" width="1.500" height="2.600" fill="#fd5b5b"/><rect x="6" y="14.100" width="5.800" height="1.200" rx="0.500" fill="#fd5b5b"/><path d="M3.100 16.300 L16.400 3.600" stroke="#2b2b2b" stroke-width="1.300"/><path d="M2.400 15.300 L15.800 2.600" stroke="#fd5b5b" stroke-width="1.350"/></svg>Марія Братко</div></div><div class="tile" style="left:304px;top:171px;width:304px;height:171px"><svg class="abs" style="left:0;top:0" width="304" height="171" viewBox="0 0 304 171">
<defs><filter id="b4" x="-5%" y="-5%" width="110%" height="110%"><feGaussianBlur stdDeviation="1.7"/></filter>
<linearGradient id="cur4" x1="0" x2="1" y1="0" y2="0"><stop offset="0" stop-color="#2f313c"/><stop offset="0.06" stop-color="#262832"/><stop offset="0.12" stop-color="#33353f"/><stop offset="0.2" stop-color="#282a34"/><stop offset="0.3" stop-color="#2d2f39"/><stop offset="0.62" stop-color="#2a2c36"/><stop offset="0.7" stop-color="#22242c"/><stop offset="0.78" stop-color="#2c2e38"/><stop offset="0.88" stop-color="#21232a"/><stop offset="0.95" stop-color="#2a2c35"/><stop offset="1" stop-color="#23252d"/></linearGradient>
<linearGradient id="face4" x1="0" x2="1" y1="0" y2="0"><stop offset="0" stop-color="#e4cec1"/><stop offset="0.55" stop-color="#d9bfb0"/><stop offset="1" stop-color="#b99a88"/></linearGradient></defs>
<rect width="304" height="171" fill="url(#cur4)"/>
<g filter="url(#b4)">
<rect x="-2" y="106" width="36" height="46" fill="#c4c5cf"/><rect x="-2" y="106" width="38" height="8" fill="#dcdde6"/><rect x="-2" y="150" width="14" height="24" fill="#3a3a44"/>
<path d="M34 176 C50 140 76 90 96 62 L112 70 L112 176 Z" fill="#14151a"/>
<path d="M40 176 C70 150 100 134 130 130 L190 132 C228 136 236 160 238 176 Z" fill="#0a0a0c"/>
<path d="M102 134 C96 100 100 50 120 28 C134 16 150 12 158 13 C180 18 194 40 196 70 C198 100 198 130 204 176 L174 176 C178 150 178 120 172 100 L120 100 C118 118 114 130 102 134 Z" fill="#7a5e45"/>
<path d="M174 176 C180 160 182 140 180 118 C190 140 200 160 204 176 Z" fill="#96744f"/>
<ellipse cx="149" cy="95" rx="37" ry="50" fill="url(#face4)"/>
<path d="M154 14 C138 26 118 44 106 62 C104 76 106 88 112 98 C114 76 124 52 154 34 Z" fill="#8b6d50"/>
<path d="M154 14 C170 22 186 40 194 62 C196 80 194 92 190 100 C186 76 176 54 160 36 Z" fill="#6d543d"/>
<path d="M120 28 C134 16 150 12 158 13 C166 16 172 20 178 26 C168 22 160 22 154 24 C142 24 130 26 120 28 Z" fill="#a58563"/>
<ellipse cx="150" cy="100" rx="7" ry="13" fill="#cbab9b" opacity="0.8"/>
<path d="M128 79 L142 81 M166 83 L178 81" stroke="#6a5040" stroke-width="2"/>
<path d="M122 72 L142 70 M164 72 L180 70" stroke="#9a7c68" stroke-width="1.500"/>
<ellipse cx="152" cy="120" rx="9" ry="3.200" fill="#b67c74"/>
<path d="M124 130 C138 146 162 146 174 130 L180 142 L120 142 Z" fill="#0b0b0d"/>
</g>
</svg>
<div class="tag" style="left:3px;top:150px;width:80px;letter-spacing:0px"><svg class="abs" style="left:3px;top:2px" width="14" height="15" viewBox="0 0 14 15"><path d="M4 1.500 h6 v1.400 h-1 v4 l2.200 2.300 v1.300 h-8.400 v-1.300 l2.200 -2.300 v-4 h-1 z" fill="#f2f2f2"/><rect x="6.400" y="10.500" width="1.200" height="4" fill="#f2f2f2"/></svg>Valentyna</div></div></div><div class="abs" style="left:1280px;top:330px;width:306px;height:173px;border:2.2px solid #03f394;border-radius:1px 1px 8px 1px"></div><!--/GALLERY-->
<!--STRIP--><div class="abs" style="left:1250px;top:617px;width:62px;height:3px;border-radius:1.500px;background:#8a8a8a"></div><div id="strip" style="position:absolute;left:1041px;top:625px;width:480px;height:180px;border-radius:7px;overflow:hidden;background:#232323"><div class="tile" style="left:0px;top:0px;width:160px;height:90px"><svg class="abs" style="left:0;top:0" width="160" height="90" viewBox="0 0 160 90">
<defs><filter id="s1" x="-5%" y="-5%" width="110%" height="110%"><feGaussianBlur stdDeviation="0.7"/></filter><clipPath id="c1"><path d="M45 13.500 a4 4 0 0 1 4 -4 h64.500 a4 4 0 0 1 4 4 V69 H45 Z"/></clipPath></defs>
<g clip-path="url(#c1)"><rect x="45" y="9" width="73" height="60" fill="#efeae6"/>
<g filter="url(#s1)">
<ellipse cx="82" cy="20" rx="12" ry="10" fill="#d8bf8e"/>
<ellipse cx="82" cy="26" rx="8.500" ry="10.500" fill="#e3b9a0"/>
<rect x="79" y="34" width="7" height="8" fill="#dba98e"/>
<path d="M60 42 C66 38 76 38 82 46 C88 38 98 38 106 42 L108 50 L100 52 L101 70 L66 70 L66 52 L58 50 Z" fill="#2fc0c9"/>
<path d="M78 38 L82 50 L87 38 Z" fill="#e0b096"/>
<rect x="60" y="50" width="7" height="20" fill="#e2b8a0"/><rect x="100" y="50" width="7" height="20" fill="#e2b8a0"/>
<ellipse cx="82" cy="29" rx="3" ry="1" fill="#c86a6a"/>
</g></g>
</svg>
<div class="tag" style="left:3px;top:69px;width:120px;letter-spacing:0.2px"><svg class="abs" style="left:0;top:0" width="19" height="19" viewBox="0 0 19 19"><rect x="6.100" y="2.700" width="5" height="8.300" rx="2.500" fill="#fd5b5b"/><path d="M5.700 8.200 h6.400 a3.200 4 0 0 1 -6.400 0 z" fill="#fd5b5b"/><rect x="8.100" y="11.800" width="1.500" height="2.600" fill="#fd5b5b"/><rect x="6" y="14.100" width="5.800" height="1.200" rx="0.500" fill="#fd5b5b"/><path d="M3.100 16.300 L16.400 3.600" stroke="#2b2b2b" stroke-width="1.300"/><path d="M2.400 15.300 L15.800 2.600" stroke="#fd5b5b" stroke-width="1.350"/></svg>Margarita Kozyr</div></div><div class="tile" style="left:160px;top:0px;width:160px;height:90px"><svg class="abs" style="left:0;top:0" width="160" height="90" viewBox="0 0 160 90">
<defs><filter id="s2" x="-5%" y="-5%" width="110%" height="110%"><feGaussianBlur stdDeviation="0.8"/></filter></defs>
<rect width="160" height="90" fill="#fdfefe"/>
<g filter="url(#s2)">
<path d="M98 50 C120 40 140 22 160 4 L160 22 C140 40 122 54 100 60 Z" fill="#bfe6e6"/>
<path d="M100 56 C124 48 144 34 160 18 L160 26 C144 42 124 56 102 62 Z" fill="#5fc3b8"/>
<path d="M104 66 C126 62 146 52 160 40 L160 52 C146 62 126 70 106 72 Z" fill="#79cdc6"/>
<path d="M0 62 C30 70 60 66 90 60 L100 70 L0 74 Z" fill="#a5dad8"/>
<path d="M0 70 C40 78 100 76 160 56 L160 90 L0 90 Z" fill="#dff0f4"/>
<path d="M120 78 C136 74 150 70 160 64 M118 84 C136 82 150 76 160 70" stroke="#8ecfd0" stroke-width="0.800" fill="none"/>
<path d="M58 66 C56 40 60 14 80 11 C100 12 100 40 98 66 Z" fill="#2a2522"/>
<ellipse cx="80" cy="40" rx="16.500" ry="22" fill="#d9b39e"/>
<path d="M63 34 C64 18 74 12 82 12 C92 13 97 22 97 34 C90 24 72 24 63 34 Z" fill="#2a2522"/>
<path d="M70 43 h7 M85 43 h7" stroke="#4a3a34" stroke-width="1.200"/>
<path d="M75 54 h11" stroke="#a8655c" stroke-width="1.400"/>
<path d="M32 90 C36 74 50 64 64 62 L96 62 C112 64 126 76 130 90 Z" fill="#8d84b5"/>
<path d="M60 62 L100 62 L102 68 L58 68 Z" fill="#ebe7ef"/>
<path d="M32 90 C34 80 40 72 50 68 L56 90 Z" fill="#b7a94a"/><path d="M130 90 C128 80 122 72 112 68 L108 90 Z" fill="#b7a94a"/>
<rect x="60" y="72" width="12" height="18" fill="#e6e2ee"/><rect x="92" y="72" width="10" height="18" fill="#e6e2ee"/>
</g>
</svg>
<div class="tag" style="left:3px;top:69px;width:120px;letter-spacing:0px"><svg class="abs" style="left:0;top:0" width="19" height="19" viewBox="0 0 19 19"><rect x="6.100" y="2.700" width="5" height="8.300" rx="2.500" fill="#fd5b5b"/><path d="M5.700 8.200 h6.400 a3.200 4 0 0 1 -6.400 0 z" fill="#fd5b5b"/><rect x="8.100" y="11.800" width="1.500" height="2.600" fill="#fd5b5b"/><rect x="6" y="14.100" width="5.800" height="1.200" rx="0.500" fill="#fd5b5b"/><path d="M3.100 16.300 L16.400 3.600" stroke="#2b2b2b" stroke-width="1.300"/><path d="M2.400 15.300 L15.800 2.600" stroke="#fd5b5b" stroke-width="1.350"/></svg>Liudmyla Hapon</div></div><div class="tile" style="left:320px;top:0px;width:160px;height:90px"><svg class="abs" style="left:0;top:0" width="160" height="90" viewBox="0 0 160 90">
<defs><filter id="s3" x="-5%" y="-5%" width="110%" height="110%"><feGaussianBlur stdDeviation="0.8"/></filter></defs>
<rect width="160" height="90" fill="#8a5a3c"/>
<g filter="url(#s3)">
<rect x="0" y="0" width="160" height="9" fill="#d8d6d2"/>
<rect x="0" y="0" width="6" height="90" fill="#c9cbd0"/>
<rect x="152" y="0" width="8" height="60" fill="#e4e4e4"/>
<rect x="5" y="8" width="27" height="62" fill="#4a3a30"/>
<rect x="11" y="11" width="18" height="9" fill="#d9dadc"/>
<rect x="9" y="21" width="21" height="12" fill="#2d5fc4"/><rect x="8" y="35" width="21" height="12" fill="#2d5fc4"/><rect x="8" y="50" width="22" height="14" fill="#3a4a78"/>
<g fill="#dfe3ec"><rect x="12" y="22" width="2" height="7"/><rect x="17" y="22" width="2" height="7"/><rect x="22" y="22" width="2" height="7"/><rect x="27" y="22" width="2" height="7"/><rect x="11" y="36" width="2" height="7"/><rect x="16" y="36" width="2" height="7"/><rect x="21" y="36" width="2" height="7"/><rect x="26" y="36" width="2" height="7"/></g>
<rect x="32" y="8" width="122" height="82" fill="#8b5a3a"/>
<g fill="#93877a"><rect x="36" y="13" width="19" height="40"/><rect x="62" y="13" width="16" height="40"/><rect x="109" y="13" width="19" height="42"/><rect x="134" y="13" width="17" height="42"/><rect x="34" y="60" width="20" height="14"/><rect x="111" y="60" width="18" height="30"/><rect x="135" y="60" width="16" height="30"/></g>
<g fill="#5a4536"><rect x="36" y="22" width="19" height="3"/><rect x="36" y="33" width="19" height="3"/><rect x="36" y="43" width="19" height="3"/><rect x="109" y="22" width="19" height="3"/><rect x="109" y="34" width="19" height="3"/><rect x="109" y="45" width="19" height="3"/><rect x="134" y="24" width="17" height="3"/><rect x="134" y="36" width="17" height="3"/><rect x="134" y="47" width="17" height="3"/></g>
<g fill="#c6a63a"><rect x="112" y="38" width="3" height="8"/><rect x="118" y="26" width="3" height="8"/></g><g fill="#a03a34"><rect x="121" y="38" width="3" height="8"/><rect x="45" y="36" width="3" height="7"/></g>
<g fill="#3f5f9a"><rect x="137" y="66" width="12" height="22"/><rect x="113" y="66" width="8" height="8"/></g>
<path d="M62 72 C62 40 66 18 84 16 C102 18 104 44 104 72 Z" fill="#a97a58"/>
<ellipse cx="86" cy="42" rx="14" ry="19" fill="#c99a80"/>
<path d="M70 40 C70 24 78 17 86 17 C96 18 101 26 101 40 C94 28 78 28 70 40 Z" fill="#b08060"/>
<path d="M48 90 C48 70 58 60 70 58 L104 60 C116 64 120 76 120 90 Z" fill="#2b2624"/>
<path d="M48 70 C52 60 62 56 68 60 L66 72 Z" fill="#4a433e"/>
</g>
</svg>
<div class="tag" style="left:3px;top:69px;width:127px;letter-spacing:0px"><svg class="abs" style="left:0;top:0" width="19" height="19" viewBox="0 0 19 19"><rect x="6.100" y="2.700" width="5" height="8.300" rx="2.500" fill="#fd5b5b"/><path d="M5.700 8.200 h6.400 a3.200 4 0 0 1 -6.400 0 z" fill="#fd5b5b"/><rect x="8.100" y="11.800" width="1.500" height="2.600" fill="#fd5b5b"/><rect x="6" y="14.100" width="5.800" height="1.200" rx="0.500" fill="#fd5b5b"/><path d="M3.100 16.300 L16.400 3.600" stroke="#2b2b2b" stroke-width="1.300"/><path d="M2.400 15.300 L15.800 2.600" stroke="#fd5b5b" stroke-width="1.350"/></svg>Malgorzata Por...</div></div><div class="tile" style="left:0px;top:90px;width:160px;height:90px"><svg class="abs" style="left:0;top:0" width="160" height="90" viewBox="0 0 160 90">
<defs><filter id="s4" x="-5%" y="-5%" width="110%" height="110%"><feGaussianBlur stdDeviation="0.9"/></filter><clipPath id="c4"><rect x="20" y="0" width="120" height="90"/></clipPath></defs>
<g clip-path="url(#c4)"><rect x="20" y="0" width="120" height="90" fill="#d6d6d6"/>
<g filter="url(#s4)">
<polygon points="20,0 64,0 50,30 20,60" fill="#e6e6e6"/>
<polygon points="20,60 50,30 56,34 56,90 20,90" fill="#bdbdbd"/>
<polygon points="64,0 140,0 140,30 54,32" fill="#e2e2e2"/>
<g stroke="#cfcfcf" stroke-width="0.700"><path d="M26 0 L20 18 M34 0 L20 36 M42 0 L24 48 M50 0 L34 42"/></g>
<rect x="60" y="32" width="80" height="58" fill="#dcdcdc"/>
<rect x="104" y="34" width="34" height="50" fill="#f6f7f9"/>
<rect x="60" y="31" width="80" height="1.500" fill="#6a6a6a"/>
<rect x="132" y="40" width="6" height="22" fill="#b9c9a4"/>
<path d="M56 90 C56 50 66 24 88 22 C108 24 118 44 116 70 L112 90 Z" fill="#3a2a24"/>
<ellipse cx="92" cy="56" rx="19" ry="24" fill="#c79a82"/>
<path d="M72 50 C74 34 84 28 94 30 C88 40 80 48 74 62 Z" fill="#3a2a24"/>
<path d="M82 54 h8 M98 54 h8" stroke="#5a4034" stroke-width="1.200"/>
<path d="M88 74 h10" stroke="#a86a5c" stroke-width="1.400"/>
<rect x="112" y="60" width="8" height="22" rx="3" fill="#c9c9c9"/>
<path d="M40 90 C60 82 80 84 90 86 C110 82 126 84 140 90 Z" fill="#1c1c1e"/>
</g></g>
</svg>
<div class="tag" style="left:3px;top:69px;width:127px;letter-spacing:0px"><svg class="abs" style="left:0;top:0" width="19" height="19" viewBox="0 0 19 19"><rect x="6.100" y="2.700" width="5" height="8.300" rx="2.500" fill="#fd5b5b"/><path d="M5.700 8.200 h6.400 a3.200 4 0 0 1 -6.400 0 z" fill="#fd5b5b"/><rect x="8.100" y="11.800" width="1.500" height="2.600" fill="#fd5b5b"/><rect x="6" y="14.100" width="5.800" height="1.200" rx="0.500" fill="#fd5b5b"/><path d="M3.100 16.300 L16.400 3.600" stroke="#2b2b2b" stroke-width="1.300"/><path d="M2.400 15.300 L15.800 2.600" stroke="#fd5b5b" stroke-width="1.350"/></svg>Małgorzata Wój...</div></div><div class="tile" style="left:160px;top:90px;width:160px;height:90px"><svg class="abs" style="left:0;top:0" width="160" height="90" viewBox="0 0 160 90">
<defs><filter id="s5" x="-5%" y="-5%" width="110%" height="110%"><feGaussianBlur stdDeviation="1.1"/></filter>
<linearGradient id="g5" x1="0" x2="1" y1="0" y2="0"><stop offset="0" stop-color="#6a4a38"/><stop offset="0.12" stop-color="#5a3c2c"/><stop offset="0.2" stop-color="#7a5a48"/><stop offset="0.25" stop-color="#e4e0dc"/><stop offset="0.34" stop-color="#efedea"/><stop offset="0.4" stop-color="#a89a90"/><stop offset="0.5" stop-color="#7a6a60"/><stop offset="0.7" stop-color="#9a8a80"/><stop offset="0.85" stop-color="#d8d0c8"/><stop offset="1" stop-color="#c8c0b8"/></linearGradient></defs>
<rect width="160" height="90" fill="url(#g5)"/>
<g filter="url(#s5)">
<rect x="60" y="0" width="100" height="14" fill="#6a5a50" opacity="0.8"/>
<ellipse cx="122" cy="24" rx="14" ry="22" fill="#f4efe8" opacity="0.9"/>
<rect x="128" y="30" width="32" height="60" fill="#ddd6ce" opacity="0.9"/>
<path d="M62 90 C62 50 68 18 92 15 C114 17 122 50 124 90 Z" fill="#a0583a"/>
<ellipse cx="93" cy="52" rx="20" ry="25" fill="#dcb8a4"/>
<path d="M70 46 C72 26 82 17 93 16 C106 18 114 28 116 46 C104 36 84 36 70 46 Z" fill="#b0623e"/>
<circle cx="83" cy="52" r="8" fill="#d4c6b8" opacity="0.45" stroke="#7a6a5a" stroke-width="0.900"/><circle cx="103" cy="52" r="8" fill="#d4c6b8" opacity="0.45" stroke="#7a6a5a" stroke-width="0.900"/>
<path d="M88 68 h10" stroke="#b0605a" stroke-width="1.600"/>
<path d="M40 90 C50 82 70 78 80 80 L106 80 C120 80 130 84 136 90 Z" fill="#1a1818"/>
</g>
</svg>
<div class="tag" style="left:3px;top:69px;width:127px;letter-spacing:-0.2px"><svg class="abs" style="left:0;top:0" width="19" height="19" viewBox="0 0 19 19"><rect x="6.100" y="2.700" width="5" height="8.300" rx="2.500" fill="#fd5b5b"/><path d="M5.700 8.200 h6.400 a3.200 4 0 0 1 -6.400 0 z" fill="#fd5b5b"/><rect x="8.100" y="11.800" width="1.500" height="2.600" fill="#fd5b5b"/><rect x="6" y="14.100" width="5.800" height="1.200" rx="0.500" fill="#fd5b5b"/><path d="M3.100 16.300 L16.400 3.600" stroke="#2b2b2b" stroke-width="1.300"/><path d="M2.400 15.300 L15.800 2.600" stroke="#fd5b5b" stroke-width="1.350"/></svg>Veronika Kryzha...</div></div><div class="tile" style="left:320px;top:90px;width:160px;height:90px"><svg class="abs" style="left:0;top:0" width="160" height="90" viewBox="0 0 160 90">
<defs><filter id="s6" x="-5%" y="-5%" width="110%" height="110%"><feGaussianBlur stdDeviation="1"/></filter></defs>
<rect width="160" height="90" fill="#04080a"/>
<g filter="url(#s6)">
<rect x="0" y="0" width="160" height="10" fill="#101a1c"/>
<rect x="8" y="12" width="140" height="6" fill="#0c1416"/>
<rect x="100" y="28" width="60" height="62" fill="#101c1c"/>
<rect x="104" y="38" width="16" height="12" fill="#05090a"/>
<rect x="0" y="52" width="56" height="38" fill="#060a0c"/>
<path d="M62 60 C60 34 66 14 84 12 C102 14 108 36 106 60 C104 68 100 72 96 74 L70 74 C66 70 63 66 62 60 Z" fill="#241c1e"/>
<ellipse cx="84" cy="48" rx="15.500" ry="21" fill="#d3b19f"/>
<path d="M68 40 C70 24 78 18 86 18 C96 20 101 28 101 42 C92 30 78 30 68 40 Z" fill="#241c1e"/>
<path d="M74 45 h8 M89 45 h8" stroke="#3a2a26" stroke-width="1.300"/>
<path d="M80 60 h9" stroke="#a86a62" stroke-width="1.400"/>
<path d="M78 66 h14 v8 h-14 z" fill="#c9a592"/>
<path d="M30 90 C34 76 44 66 58 64 L74 66 L86 74 L98 66 L112 64 C124 68 130 78 132 90 Z" fill="#8fb4dc"/>
</g>
</svg>
<div class="tag" style="left:3px;top:69px;width:127px;letter-spacing:-0.1px"><svg class="abs" style="left:0;top:0" width="19" height="19" viewBox="0 0 19 19"><rect x="6.100" y="2.700" width="5" height="8.300" rx="2.500" fill="#fd5b5b"/><path d="M5.700 8.200 h6.400 a3.200 4 0 0 1 -6.400 0 z" fill="#fd5b5b"/><rect x="8.100" y="11.800" width="1.500" height="2.600" fill="#fd5b5b"/><rect x="6" y="14.100" width="5.800" height="1.200" rx="0.500" fill="#fd5b5b"/><path d="M3.100 16.300 L16.400 3.600" stroke="#2b2b2b" stroke-width="1.300"/><path d="M2.400 15.300 L15.800 2.600" stroke="#fd5b5b" stroke-width="1.350"/></svg>Kristina Kabano...</div></div></div><div class="abs" style="left:1569px;top:702px;width:25px;height:25px;border-radius:3px;background:#151515"></div><svg class="abs" style="left:1574px;top:705px" width="14" height="20" viewBox="0 0 14 20"><path d="M3.500 3 L10.500 10 L3.500 17" fill="none" stroke="#fff" stroke-width="2.400"/></svg><!--/STRIP-->
<!--TOOLBAR--><div id="toolbar"><div class="abs" style="left:0;top:0.4px;width:1600px;height:57px">
<svg class="abs" style="left:40px;top:8px" width="24" height="28" viewBox="0 0 24 28"><rect x="8.600" y="3.500" width="7" height="13" rx="3.500" fill="none" stroke="#f2f2f2" stroke-width="1.400"/><path d="M5 12.500 a7.100 7.100 0 0 0 14.200 0 M12.100 19.800 V24 M8 24.300 h8.200" fill="none" stroke="#f2f2f2" stroke-width="1.400"/><path d="M1 27 L23 2" stroke="#000" stroke-width="4"/><path d="M1.500 26.500 L22.500 2.500" stroke="#ea1a52" stroke-width="2.200"/></svg>
<svg class="abs" style="left:79px;top:16px" width="10" height="8" viewBox="0 0 10 8"><path d="M1.500 6 L5 2.500 L8.500 6" fill="none" stroke="#cfcfcf" stroke-width="1.200"/></svg>
<svg class="abs" style="left:131px;top:8px" width="30" height="28" viewBox="0 0 30 28"><rect x="2.500" y="8" width="16.500" height="13" rx="3" fill="none" stroke="#f2f2f2" stroke-width="1.400"/><path d="M20.500 12.500 L26.500 9 V20 L20.500 16.500 Z" fill="none" stroke="#f2f2f2" stroke-width="1.400" stroke-linejoin="round"/><path d="M3 27 L25 2" stroke="#000" stroke-width="4"/><path d="M3.500 26.500 L24.500 2.500" stroke="#ea1a52" stroke-width="2.200"/></svg>
<svg class="abs" style="left:177px;top:16px" width="10" height="8" viewBox="0 0 10 8"><path d="M1.500 6 L5 2.500 L8.500 6" fill="none" stroke="#cfcfcf" stroke-width="1.200"/></svg>
<svg class="abs" style="left:561px;top:10px" width="22" height="22" viewBox="0 0 22 22"><circle cx="7.500" cy="5.500" r="3" fill="none" stroke="#f2f2f2" stroke-width="1.400"/><circle cx="14.800" cy="9" r="2.700" fill="none" stroke="#f2f2f2" stroke-width="1.400"/><path d="M2 19.500 v-2.500 a4.500 4.500 0 0 1 4.500 -4.500 h2 a4.500 4.500 0 0 1 2 0.500 M9.500 19.500 a3 3 0 0 1 -0.300 -1.500 a3.800 3.800 0 0 1 3.800 -3.800 h3.600 a3.800 3.800 0 0 1 3.800 3.800 a1.500 1.500 0 0 1 -1.500 1.500 z M2 19.500 h5" fill="none" stroke="#f2f2f2" stroke-width="1.400" stroke-linecap="round"/></svg>
<div class="abs" style="left:588px;top:11.3px;font-size:12.500px;line-height:16px;color:#d6d6d6;letter-spacing:-0.2px">32</div>
<svg class="abs" style="left:620px;top:16px" width="10" height="8" viewBox="0 0 10 8"><path d="M1.500 6 L5 2.500 L8.500 6" fill="none" stroke="#cfcfcf" stroke-width="1.200"/></svg>
<svg class="abs" style="left:669px;top:10px" width="24" height="24" viewBox="0 0 24 24"><path d="M6 2.500 h9 a4 4 0 0 1 4 4 v0.500" fill="none" stroke="#f2f2f2" stroke-width="1.400"/><path d="M5.500 6.500 h9 a4 4 0 0 1 4 4 v4 a4 4 0 0 1 -4 4 h-3.500 l-4 3.500 v-3.500 h-1.500 a4 4 0 0 1 -4 -4 v-4 a4 4 0 0 1 4 -4 z" fill="#000" stroke="#f2f2f2" stroke-width="1.400" stroke-linejoin="round"/><circle cx="6.500" cy="12.500" r="1" fill="#f2f2f2"/><circle cx="10" cy="12.500" r="1" fill="#f2f2f2"/><circle cx="13.500" cy="12.500" r="1" fill="#f2f2f2"/></svg>
<div class="abs" style="left:686px;top:6.500px;width:15px;height:15px;border-radius:50%;background:#f0323f;color:#fff;font-size:10.500px;line-height:15px;text-align:center;font-weight:bold">1</div>
<svg class="abs" style="left:710px;top:16px" width="10" height="8" viewBox="0 0 10 8"><path d="M1.500 6 L5 2.500 L8.500 6" fill="none" stroke="#cfcfcf" stroke-width="1.200"/></svg>
<svg class="abs" style="left:763px;top:10px" width="26" height="22" viewBox="0 0 26 22"><path d="M13 20 C5 14 1.500 10.500 1.500 6.800 C1.500 3.600 4 1.500 6.800 1.500 C9.200 1.500 11.500 2.800 13 5.200 C14.500 2.800 16.800 1.500 19.200 1.500 C22 1.500 24.500 3.600 24.500 6.800 C24.500 10.500 21 14 13 20 Z" fill="none" stroke="#f2f2f2" stroke-width="1.400" stroke-linejoin="round"/></svg>
<svg class="abs" style="left:809px;top:16px" width="10" height="8" viewBox="0 0 10 8"><path d="M1.500 6 L5 2.500 L8.500 6" fill="none" stroke="#cfcfcf" stroke-width="1.200"/></svg>
<div class="abs" style="left:863px;top:11px;width:24px;height:21px;border-radius:4px;background:#1beb85"></div>
<svg class="abs" style="left:868px;top:14px" width="14" height="15" viewBox="0 0 14 15"><path d="M7 2 L2 7.500 H5.500 V13 H8.500 V7.500 H12 Z" fill="#000"/></svg>
<svg class="abs" style="left:956px;top:10px" width="24" height="24" viewBox="0 0 24 24"><circle cx="17.500" cy="5.500" r="3.600" fill="none" stroke="#f2f2f2" stroke-width="1.400"/><circle cx="6.500" cy="17.500" r="3.600" fill="none" stroke="#f2f2f2" stroke-width="1.400"/><path d="M2.800 9.500 V6.500 a4 4 0 0 1 4 -4 H10 M21.200 13.500 V17 a4 4 0 0 1 -4 4 H14" fill="none" stroke="#f2f2f2" stroke-width="1.400" stroke-linecap="round"/></svg>
<svg class="abs" style="left:1041px;top:10px" width="24" height="24" viewBox="0 0 24 24"><circle cx="11.500" cy="11.500" r="10" fill="none" stroke="#f2f2f2" stroke-width="1.500"/><circle cx="11.500" cy="11.500" r="4.200" fill="#f2f2f2"/></svg>
<svg class="abs" style="left:1133px;top:10px" width="24" height="24" viewBox="0 0 24 24"><circle cx="12" cy="11.500" r="10.500" fill="none" stroke="#f2f2f2" stroke-width="1.500"/><circle cx="7" cy="11.500" r="1.300" fill="#f2f2f2"/><circle cx="12" cy="11.500" r="1.300" fill="#f2f2f2"/><circle cx="17" cy="11.500" r="1.300" fill="#f2f2f2"/></svg>
<svg class="abs" style="left:1539px;top:8px" width="28" height="26" viewBox="0 0 28 26"><path d="M11 2.500 H24.500 V21 L17 24.500 V6 L24.500 2.500" fill="none" stroke="#f0145a" stroke-width="1.500" stroke-linejoin="round"/><circle cx="10" cy="7.500" r="2.600" fill="#000" stroke="#f2f2f2" stroke-width="1.300"/><path d="M8.500 11 C6.500 11.500 4.500 13.500 3.500 16 L5.500 17 L7.500 14.500 L7 18 L3.500 23.500 L5.800 24.500 L9.500 19.500 L11 24.500 L13.500 24.300 L12.500 18 L12.500 15 L15 16.800 L16 15 L12.500 11.500 Z" fill="#000" stroke="#f2f2f2" stroke-width="1.300" stroke-linejoin="round"/></svg>
<div class="abs" style="left:611px;top:57px;width:455px;height:1.500px;background:#d8d8d8"></div>
<div class="tl" style="left:39.2px;letter-spacing:0.26px">Звук</div><div class="tl" style="left:128.2px;letter-spacing:-0.44px">Видео</div><div class="tl" style="left:543.8px;letter-spacing:-0.14px">Участники</div><div class="tl" style="left:672.0px;letter-spacing:-0.55px">Чат</div><div class="tl" style="left:735.0px;letter-spacing:-0.21px">Отреагировать</div><div class="tl" style="left:842.5px;letter-spacing:-0.29px">Поделиться</div><div class="tl" style="left:932.5px;letter-spacing:0.05px">Приложения</div><div class="tl" style="left:1033.0px;letter-spacing:-0.23px">Запись</div><div class="tl" style="left:1101.0px;letter-spacing:0.04px">Дополнительно</div><div class="tl" style="left:1534.7px;letter-spacing:-0.42px">Выйти</div></div></div><!--/TOOLBAR-->
<!--WINTASK--><div id="wintask">
<div class="abs" style="left:544px;top:0;width:160px;height:30px;background:#b4682c"></div>
<div class="abs" style="left:704px;top:0;width:160px;height:30px;background:linear-gradient(90deg,#4a4642 0,#6c655f 30%,#7f776f 55%,#5a5551 80%,#3b3a38 100%)"></div>
<div class="abs" style="left:152px;top:28px;width:152px;height:2px;background:#f2dcc0"></div>
<div class="abs" style="left:387px;top:28px;width:152px;height:2px;background:#f2dcc0"></div>
<div class="abs" style="left:544px;top:28px;width:160px;height:2px;background:#ee7f22"></div>
<div class="abs" style="left:704px;top:28px;width:160px;height:2px;background:#f2dcc0"></div>
<div class="abs" style="left:869px;top:28px;width:152px;height:2px;background:#f2dcc0"></div>
<svg class="abs" style="left:10px;top:7px" width="16" height="16" viewBox="0 0 16 16"><g fill="#fff"><path d="M0 2.300 L6.800 1.300 V7.500 H0 Z"/><path d="M7.800 1.200 L16 0 V7.500 H7.800 Z"/><path d="M0 8.500 H6.800 V14.700 L0 13.700 Z"/><path d="M7.800 8.500 H16 V16 L7.800 14.800 Z"/></g></svg>
<svg class="abs" style="left:46px;top:6px" width="18" height="18" viewBox="0 0 18 18"><circle cx="10.500" cy="7" r="5" fill="none" stroke="#fff" stroke-width="1.300"/><path d="M7 10.800 L1.500 16.500" stroke="#fff" stroke-width="1.500"/></svg>
<svg class="abs" style="left:81px;top:7px" width="18" height="16" viewBox="0 0 18 16"><rect x="2.500" y="3.500" width="9" height="8" fill="none" stroke="#fff" stroke-width="1.200"/><path d="M2 0.800 h10 M2 14.500 h10 M15 0.500 v3 M15 5.500 v5 M15 12.500 v3" stroke="#fff" stroke-width="1.300"/></svg>
<svg class="abs" style="left:121px;top:7px" width="16" height="16" viewBox="0 0 16 16"><circle cx="8" cy="8" r="7.800" fill="#1b7fd6"/><path d="M2 12 C0 6 5 1 10 1.500 C14 2 16 5.500 15.500 8.500 C14 5.500 9 5 7.500 8 C6.500 11 9 14 13 13.500 C10 16.500 4 16 2 12 Z" fill="#3ccf7f"/><path d="M15.600 8.800 C15 11.500 12.500 12.500 10.500 12 C8.500 11.500 8 9.500 9 8.500 C9.500 6.500 14 6 15.600 8.800 Z" fill="#1665c0"/></svg>
<svg class="abs" style="left:157px;top:6px" width="15" height="18" viewBox="0 0 15 18"><path d="M1 1 H11 L14 4 V17 H1 Z" fill="#fbe38b"/><path d="M11 12 H14 V17 H11 Z" fill="#e8c95a"/></svg>
<svg class="abs" style="left:318px;top:6px" width="18" height="18" viewBox="0 0 18 18"><path d="M5 4.500 a4 4 0 0 1 8 0" fill="none" stroke="#2fa7e8" stroke-width="1.200"/><rect x="1.500" y="4.500" width="15" height="12.500" rx="1.500" fill="#f3f3f3"/><rect x="5" y="7" width="3.500" height="3.500" fill="#f25022"/><rect x="9.500" y="7" width="3.500" height="3.500" fill="#7fba00"/><rect x="5" y="11.500" width="3.500" height="3.500" fill="#00a4ef"/><rect x="9.500" y="11.500" width="3.500" height="3.500" fill="#ffb900"/></svg>
<svg class="abs" style="left:356px;top:7px" width="16" height="16" viewBox="0 0 16 16"><circle cx="8" cy="8" r="7.800" fill="#f39a1d"/><path d="M8 0.200 A7.800 7.800 0 0 1 15.800 8 L8 8 Z" fill="#6a3fd0"/><path d="M8 3 L12 4.500 V8 C12 10.500 10.500 12.500 8 13.500 C5.500 12.500 4 10.500 4 8 V4.500 Z" fill="#fff"/><circle cx="8" cy="8" r="1.500" fill="#3a3a6a"/></svg>
<svg class="abs" style="left:391px;top:7px" width="16" height="16" viewBox="0 0 16 16"><circle cx="8" cy="8" r="7.500" fill="#e8453c"/><path d="M8 8 L1.500 11.800 A7.500 7.500 0 0 0 8 15.500 L11.700 9.500 Z" fill="#34a853"/><path d="M8 8 L1.500 4.300 A7.500 7.500 0 0 0 1.500 11.800 L5 10 Z" fill="#34a853"/><path d="M8 8 L14.500 4.300 A7.500 7.500 0 0 1 8 15.500 Z" fill="#fbbc05"/><path d="M1.500 4.300 A7.500 7.500 0 0 1 14.500 4.300 L8 4.300 Z" fill="#e8453c"/><circle cx="8" cy="8" r="3.600" fill="#fff"/><circle cx="8" cy="8" r="2.800" fill="#4285f4"/><rect x="9.500" y="9.500" width="5.500" height="6" rx="1" fill="#9fd0f0"/></svg>
<div class="abs" style="left:552px;top:7px;width:16px;height:16px;border-radius:50%;background:#1a5cf0;color:#fff;font-size:8px;line-height:15px;text-align:center;font-weight:bold;letter-spacing:-0.3px">zm</div><div class="abs" style="left:712px;top:7px;width:16px;height:16px;border-radius:50%;background:#1a5cf0;color:#fff;font-size:8px;line-height:15px;text-align:center;font-weight:bold;letter-spacing:-0.3px">zm</div>
<svg class="abs" style="left:873px;top:6px" width="17" height="17" viewBox="0 0 17 17"><rect x="3" y="1" width="13.500" height="15" rx="1.500" fill="#f6e6dc"/><rect x="0.500" y="3" width="11.500" height="11.500" rx="1.500" fill="#d35230"/><path d="M4 12 V5.500 H7 a2.200 2.200 0 0 1 0 4.400 H4.500" fill="none" stroke="#fff" stroke-width="1.600"/></svg>
<div class="abs" style="left:1180px;top:7px;width:16px;height:16px;border-radius:50%;background:#1a5cf0;color:#fff;font-size:8px;line-height:15px;text-align:center;font-weight:bold;letter-spacing:-0.3px">zm</div>
<svg class="abs" style="left:1204px;top:6px" width="14" height="18" viewBox="0 0 14 18"><rect x="4" y="1" width="6" height="10.500" rx="3" fill="#fff"/><path d="M1.800 8.500 a5.200 5.200 0 0 0 10.400 0 M7 14 v2.500 M4 16.800 h6" fill="none" stroke="#fff" stroke-width="1.200"/></svg>
<svg class="abs" style="left:1227px;top:6px" width="18" height="18" viewBox="0 0 18 18"><rect x="1" y="1.500" width="16" height="11.500" fill="#8a95a8" stroke="#c8d0dc" stroke-width="0.800"/><rect x="2" y="14" width="6" height="2.500" fill="#aab"/><rect x="10" y="14" width="6" height="2.500" fill="#aab"/><circle cx="9" cy="7.200" r="4" fill="none" stroke="#e0161c" stroke-width="1.600"/><path d="M6.200 4.500 L11.800 10" stroke="#e0161c" stroke-width="1.600"/></svg>
<div class="abs" style="left:1252px;top:7px;width:16px;height:16px;background:#f47c14"></div>
<svg class="abs" style="left:1254px;top:9px" width="12" height="12" viewBox="0 0 12 12"><rect x="1" y="1" width="10" height="10" rx="2" fill="none" stroke="#ffe6cc" stroke-width="1"/><circle cx="6" cy="6" r="2.500" fill="none" stroke="#ffe6cc" stroke-width="1"/></svg>
<div class="abs" style="left:1276px;top:7px;width:16px;height:16px;border-radius:50%;background:#f47c14"></div>
<svg class="abs" style="left:1278px;top:9px" width="12" height="12" viewBox="0 0 12 12"><path d="M1 10 L6 2 L11 10 M3.500 10 L6 5.500 L8.500 10" fill="none" stroke="#fff" stroke-width="1.300"/></svg>
<div class="abs" style="left:1300px;top:7px;width:16px;height:16px;background:#f47c14"></div>
<svg class="abs" style="left:1302px;top:9px" width="12" height="12" viewBox="0 0 12 12"><path d="M2 10 L5 5 C6 2.500 8.500 1.500 10.500 1.500 C10.500 3.500 9.500 6 7 7 Z M3 7 L1.500 8.500 M5 9 L3.500 10.500" fill="none" stroke="#ffe6cc" stroke-width="1"/></svg>
<svg class="abs" style="left:1324px;top:7px" width="16" height="16" viewBox="0 0 16 16"><rect width="16" height="16" fill="#2f9fd8"/><path d="M0 12 L16 9 V16 H0 Z" fill="#8fc05a"/><rect x="3" y="2.500" width="9" height="6" fill="none" stroke="#e8f4fb" stroke-width="1"/><rect x="6" y="6" width="8" height="6" fill="#3a8ac0" stroke="#e8f4fb" stroke-width="1"/></svg>
<svg class="abs" style="left:1349px;top:6px" width="13" height="18" viewBox="0 0 13 18"><ellipse cx="6.500" cy="9" rx="6" ry="8.500" fill="#1a7fe0"/><path d="M3.500 5.800 L9 11.500 L6.500 14 V4 L9 6.500 L3.500 12.200" fill="none" stroke="#fff" stroke-width="1.100"/></svg>
<svg class="abs" style="left:1372px;top:10px" width="18" height="10" viewBox="0 0 18 10"><rect x="1" y="1" width="14" height="8" fill="none" stroke="#fff" stroke-width="1.200"/><rect x="15.500" y="3.500" width="1.500" height="3" fill="#fff"/><rect x="2.500" y="2.500" width="4" height="5" fill="#fff"/></svg>
<svg class="abs" style="left:1398px;top:8px" width="15" height="14" viewBox="0 0 15 14"><path d="M1.500 13 a11.500 11.500 0 0 1 11.500 -11.500 M5 13 a8 8 0 0 1 8 -8 M8.500 13 a4.500 4.500 0 0 1 4.500 -4.500" fill="none" stroke="#fff" stroke-width="1.200"/><circle cx="12.200" cy="12.200" r="1.300" fill="#fff"/></svg>
<svg class="abs" style="left:1419px;top:6px" width="19" height="18" viewBox="0 0 19 18"><path d="M1.500 6.500 h3 l4 -3.500 v12 l-4 -3.500 h-3 z" fill="none" stroke="#fff" stroke-width="1.100" stroke-linejoin="round"/><path d="M11 6.500 a3.500 3.500 0 0 1 0 5 M13.300 4.300 a6.500 6.500 0 0 1 0 9.400 M15.600 2.200 a9.600 9.600 0 0 1 0 13.600" fill="none" stroke="#fff" stroke-width="1.100"/></svg>
<svg class="abs" style="left:1447px;top:6px" width="19" height="18" viewBox="0 0 19 18"><path d="M12.500 1.500 L15.500 3.500 L8 15 L5 16.500 L5 13 Z" fill="none" stroke="#fff" stroke-width="1.100" stroke-linejoin="round"/><path d="M6.500 9.500 C2 9 0.500 13 3 15 M13 10.500 C16.500 9 17.500 12.500 14.500 13" fill="none" stroke="#fff" stroke-width="1.100"/></svg>
<svg class="abs" style="left:1558px;top:7px" width="18" height="17" viewBox="0 0 18 17"><path d="M1 0.500 H17 V13 H11.500 L9 15.800 L6.500 13 H1 Z" fill="#fff"/><path d="M4 4 h10 M4 6.800 h10 M4 9.600 h7" stroke="#1d1f1f" stroke-width="1.100"/></svg>
<div class="abs" style="left:1595px;top:0;width:1px;height:30px;background:#5a5a5a"></div>
<div class="kl" style="left:176.0px;top:8px;letter-spacing:-0.68px">2024</div><div class="kl" style="left:411.0px;top:8px;letter-spacing:-0.15px">Вхідні (1 385) - m.koz...</div><div class="kl" style="left:572.0px;top:8px;letter-spacing:0.04px">Zoom Workplace</div><div class="kl" style="left:732.0px;top:8px;letter-spacing:0.01px">Zoom Конференция</div><div class="kl" style="left:893.5px;top:8px;letter-spacing:-0.25px">Презентація_9_Грінч...</div><div class="kl" style="left:1151.0px;top:5px;letter-spacing:-0.84px">UK</div><div class="kl" style="left:1479.0px;top:8px;letter-spacing:-0.71px">УКР</div><div class="kl" style="left:1515.0px;top:8px;letter-spacing:-0.63px">11:08</div></div><!--/WINTASK-->
</body>
</html>
